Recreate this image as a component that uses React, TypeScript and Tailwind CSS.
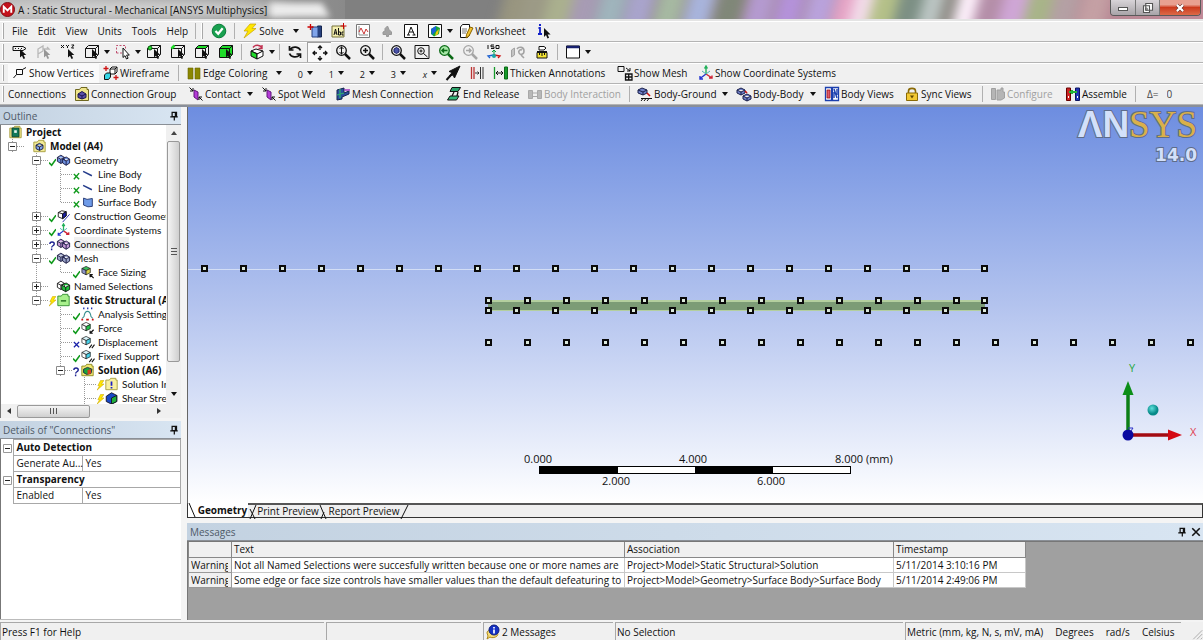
import type { ReactNode } from "react";
import clsx from "clsx";

/* ---------- icons ---------- */

const Svg = ({ children, className = "h-4 w-4" }: { children: ReactNode; className?: string }) => (
  <svg viewBox="0 0 16 16" className={clsx("shrink-0", className)} fill="none" stroke="#111" aria-hidden="true">
    {children}
  </svg>
);

const cursor = <path d="M8 5v8.500l2-1.800 1.500 3.300 1.600-.8-1.500-3.100h2.700z" fill="#111" stroke="none" />;

const cubeLines = <path d="M1.500 4.500l3-3h10v9l-3 3h-10zM1.500 4.500h10v9M11.500 4.500l3-3" />;

const isoCube = (left: string, right: string, top: string) => (
  <g stroke="#1a1a1a" strokeLinejoin="round">
    <path d="M2 5l6-3 6 3-6 3z" fill={top} />
    <path d="M2 5v6l6 3V8z" fill={left} />
    <path d="M14 5v6l-6 3V8z" fill={right} />
  </g>
);

const twoCubes = (fill: string) => (
  <g stroke="#14143c" strokeLinejoin="round" fill={fill}>
    <path d="M1 5l4-2.500L9 5v4.500l-4 2.500-4-2.500zM1 5l4 2 4-2M5 7v5" />
    <path d="M7 7l4-2.500L15 7v4.500L11 14l-4-2.500zM7 7l4 2 4-2M11 9v5" />
  </g>
);

const folder = (fill: string, line: string) => (
  <path d="M1.500 3.500h4l1.500-2h6v2h1.500v11h-13z" fill={fill} stroke={line} />
);

const magnifier = (color: string, mark: ReactNode, lens = "none") => (
  <g stroke={color}>
    <circle cx="6.500" cy="6.500" r="4.800" fill={lens} strokeWidth="1.300" />
    <path d="M10 10l5 5" strokeWidth="2.500" />
    {mark}
  </g>
);

const bolt = <path d="M8 1h6l-4 4.500h4L2 15l4-7H2z" fill="#ffe600" stroke="#c9a400" strokeWidth=".7" />;

const icons: Record<string, ReactNode> = {
  check: (
    <>
      <circle cx="8" cy="8" r="6.800" fill="#18a04f" stroke="#0b7b39" />
      <path d="M4.500 8l2.700 2.800 4.500-5.600" stroke="#fff" strokeWidth="2.200" />
    </>
  ),
  bolt,
  plane: (
    <>
      <path d="M10.500 3h4v11h-4z" fill="#27407e" stroke="#15254f" />
      <path d="M5 4h6v10H5z" fill="#7fa4ea" stroke="#27407e" />
      <path d="M3.500 1v6M.5 4h6" stroke="#c00" strokeWidth="1.300" />
    </>
  ),
  label: (
    <>
      <path d="M1 3h12v11H1z" fill="#f4efb0" stroke="#77723a" />
      <path d="M3 12l1.500-6L6 12M3.500 10H6M7.500 5v7h2V9h-2M12.500 9h-1.500v3h1.500" />
      <path d="M12.500 0v6M9.500 3h6" stroke="#c00" />
    </>
  ),
  chart: (
    <>
      <path d="M1.500 1.500h13v13h-13z" fill="#fff" stroke="#777" />
      <path d="M4 3v9h9" stroke="#888" />
      <path d="M4 9l2-4 3 6 2-5 2 3" stroke="#c33" />
    </>
  ),
  grayCloud: <path d="M4 11.500V9l2-1V5.500L8.500 3l1.500 3.500 2.500 2.500v2.500H9.500v2h-2v-2z" fill="#a3a3a3" stroke="#989898" />,
  annotation: (
    <>
      <path d="M1.500 1.500h13v13h-13z" fill="#fff" />
      <path d="M4 12h3M9.500 12h3M5 12l3-8 3.500 8M6 9h4.500" />
    </>
  ),
  contour: (
    <>
      <path d="M1.500 1.500h13v13h-13z" fill="#fff" />
      <path d="M4 6l5-3 4 2-1 6-5 2.500-3-2.500z" fill="#15a53b" stroke="none" />
      <path d="M4 6l5-3v5l-4 4z" fill="#1b63d8" stroke="none" />
      <path d="M9 9l3-3-1 5-3 2z" fill="#f0c80e" stroke="none" />
    </>
  ),
  worksheet: (
    <>
      <path d="M2.500 4l2-2.500h7v11l-2 2h-7z" fill="#fff" />
      <path d="M4 6h5M4 8h5M4 10h4" stroke="#777" />
      <path d="M12 4l3 1-4 8-3 2 .5-3.500z" fill="#f2c230" stroke="#8a6400" />
    </>
  ),
  info: (
    <>
      <path d="M2.500 5H4v6M2 11h4M3 2h2" stroke="#1322c9" strokeWidth="1.800" />
      <path d="M8 5v9l2-2 1.500 3.500 1.600-.8-1.500-3.200h3z" fill="#111" stroke="none" />
    </>
  ),
  tag: (
    <>
      <path d="M1 2.500h10l3 2-3 2H1zM3 4.500h1M6 4.500h1M9 4.500h1" />
      {cursor}
    </>
  ),
  flag: (
    <g opacity=".4">
      <path d="M2 14V5l5-3v5l-5 3M7 5h6l-2-2" stroke="#666" strokeWidth="1.300" />
      {cursor}
    </g>
  ),
  xyz: (
    <>
      <path d="M1 1l3 3M4 1L1 4M6 1l1.500 1.500L9 1M7.500 2v2M11.500 1H14l-2.500 3H14" />
      {cursor}
    </>
  ),
  selectMode: (
    <>
      {cubeLines}
      {cursor}
    </>
  ),
  boxSelect: (
    <>
      <path d="M1.500 9V1.500h9V5M1.500 9H7" stroke="#c05070" strokeDasharray="2 1.500" />
      <path d="M8 4v9.500l2-1.800 1.500 3.300 1.600-.8-1.500-3.100h2.700z" fill="#fff" />
    </>
  ),
  vertex: (
    <>
      {cubeLines}
      <circle cx="4" cy="4" r="2" fill="#1fdc2a" stroke="#0a5d10" />
      {cursor}
    </>
  ),
  edge: (
    <>
      {cubeLines}
      <path d="M1.500 4.500l3-3" stroke="#1fdc2a" strokeWidth="2.500" />
      {cursor}
    </>
  ),
  face: (
    <>
      <path d="M1.500 4.500l3-3h10l-3 3z" fill="#1fdc2a" stroke="none" />
      {cubeLines}
      {cursor}
    </>
  ),
  body: (
    <>
      <path d="M1.500 4.500l3-3h10v9l-3 3h-10z" fill="#1fdc2a" stroke="none" />
      {cubeLines}
      {cursor}
    </>
  ),
  viewCube: (
    <>
      <path d="M2 7l5-2 7 2-5 3z" fill="#fff" />
      <path d="M2 7v5l6 3v-5z" fill="#1fdc2a" />
      <path d="M14 7v5l-6 3v-5z" fill="#fff" />
      <path d="M4 3.500c2-3 7-3 9 .5M13 1v3.500H9.500" stroke="#c03050" strokeWidth="1.400" />
    </>
  ),
  rotate: (
    <path d="M13.500 6.500C12 2.500 6 2 3.500 5M2.500 2v4h4M2.500 9.500C4 13.500 10 14 12.500 11M13.500 14v-4h-4" strokeWidth="1.700" />
  ),
  pan: (
    <path
      d="M8 1v4M8 11v4M1 8h4M11 8h4M6 3l2-2 2 2M6 13l2 2 2-2M3 6L1 8l2 2M13 6l2 2-2 2"
      strokeWidth="1.300"
    />
  ),
  zoom: magnifier("#111", <path d="M6.500 2.500v8M4.500 5l2-2 2 2M4.500 8l2 2 2-2" />),
  zoomIn: magnifier("#111", <path d="M6.500 4v5M4 6.500h5" strokeWidth="1.500" />),
  fit: magnifier("#111", <path d="M4 5l2.500-1.500L9 5v3L6.500 9.500 4 8z" fill="#4a53a8" stroke="#1d2266" />),
  fitBox: (
    <>
      <path d="M1 1.500h14v13H1z" />
      <circle cx="7" cy="7" r="3.300" />
      <path d="M9.500 9.500l4 3.500M5.500 7h3M7 5.500v3" />
    </>
  ),
  prevView: magnifier("#0b6a16", <path d="M9.500 6.500H4M6 4.500l-2 2 2 2" strokeWidth="1.500" />, "#a8e8a8"),
  nextView: magnifier("#a5a5a5", <path d="M4 6.500h5M7 4.500l2 2-2 2" strokeWidth="1.400" />),
  iso: (
    <>
      <path d="M2 1v4M5 4.500h3v-1.700H5V1h3M10 1.500h3v3h-3z" />
      <path d="M8 6v5M6 8l2-2 2 2" stroke="#0a9a3a" />
      <path d="M8 11l-6 1 2 2" stroke="#1a5fd0" strokeWidth="1.300" />
      <path d="M8 11l6 1-2 2" stroke="#c11" strokeWidth="1.300" />
      <circle cx="8" cy="12" r="2" fill="#1aa7a7" stroke="none" />
    </>
  ),
  look: (
    <g stroke="#a3a3a3">
      <path d="M1.500 6l3-2v7l-3 2z" fill="#c4c4c4" />
      <path d="M7 5c2-3 7-2 7 2s-4 4-5 2 1-4 3-3M11 11l3 3" strokeWidth="1.600" />
    </g>
  ),
  ruler: (
    <>
      <path d="M5 2.500h5l2 1.500-2 2H5z" fill="#fff" />
      <path d="M3 8.500h10v5.500H3z" fill="#f4e434" />
      <path d="M5.500 9v2M8 9v3M10.500 9v2M3 7.500h10" />
    </>
  ),
  viewport: (
    <>
      <path d="M1.500 2h13v12h-13z" fill="#fff" />
      <path d="M1.500 3h13" stroke="#17206e" strokeWidth="2.500" />
    </>
  ),
  vertices: <path d="M4.500 4.500h6v5h-6zM10.500 4.500L14 2.500M1.500 13l3-3.500" />,
  wireframe: (
    <>
      <path d="M7 4l2-2h5v5l-2 2H7zM7 4h5v5M12 4l2-2" fill="#fff" />
      <path d="M1.500 10l2-2h4v4l-2 2.500h-4z" fill="#35d5e5" />
      <path d="M3 1v5M.5 3.500h5M13 10v5M10.500 12.500h5" stroke="#c11" strokeWidth="1.300" />
    </>
  ),
  coloring: <path d="M2 3h5v11H2zM9 3h5v11H9z" fill="#8b8700" stroke="#6a6600" strokeWidth=".6" />,
  arrow: (
    <>
      <path d="M1.500 15l4.500-5" strokeWidth="2" />
      <path d="M15 1L4 6.500l3 1L4.500 11l3.500-1 1.500 3z" fill="#111" strokeLinejoin="round" />
    </>
  ),
  distance: (
    <>
      <path d="M2.500 2v12M5 2v12" stroke="#b33" strokeWidth="1.300" />
      <path d="M11.500 2v12M14 2v12M6 8h4M8.500 6.500L10 8l-1.500 1.500" stroke="#333" />
    </>
  ),
  thicken: (
    <>
      <path d="M1.500 2v12" stroke="#169a2a" strokeWidth="1.300" />
      <path d="M3 8h7M5 6L3 8l2 2M8 6l2 2-2 2" />
      <path d="M11.500 2h3v12h-3z" fill="#169a2a" stroke="#0b6a16" />
    </>
  ),
  mesh: (
    <>
      <path d="M1 1.500h6v5H1zM9 3l4 3M13 3v3h-3" />
      <path d="M8.500 9H15v6H8.500zM11.700 9v6M8.500 12H15" strokeWidth="1.300" />
    </>
  ),
  triad: (
    <g strokeWidth="1.400">
      <path d="M8 1v8M6.500 3.500L8 1l1.500 2.500" stroke="#22b05a" />
      <path d="M8 9l-6 4.500M2 11v3h3" stroke="#2334d0" />
      <path d="M8 9l6 4M14 10.500V13h-3" stroke="#d02334" />
      <path d="M8 9l4-3M8 9L4 6" stroke="#4bb0b0" strokeWidth="1" />
    </g>
  ),
  connGroup: (
    <>
      {folder("#efe58a", "#6f6820")}
      <path d="M4 8l4-2.500L12 8v3.500L8 13l-4-1.500z" fill="#5a4fa8" stroke="#1c1650" />
      <path d="M4 8l4 2 4-2M8 10v3" stroke="#1c1650" />
    </>
  ),
  contact: (
    <>
      <path d="M6 4l4 2v8l-4-3z" fill="#b43bd8" stroke="#5e1578" />
      <path d="M1.500 1.500L5 5M5 2v3H2M14.500 14.500L11 11M11 14v-3h3" />
    </>
  ),
  meshConn: (
    <>
      <path d="M2 4l7-2v5l5-2v3L7 11v2l-5 1z" fill="#2b4f9e" stroke="#13224d" />
      <path d="M2 9l7-2M5 3v9" stroke="#2fae6b" strokeWidth="1.300" />
      <path d="M9 4h6" stroke="#a03ac0" strokeWidth="1.500" />
    </>
  ),
  release: (
    <>
      <path d="M6 1.500h8.500l-2.500 4H4z" fill="#2aa36a" />
      <path d="M8 6l-2 4M12 6l-1 4" strokeWidth="1.300" />
      <path d="M4 10h9l-2.500 4H1.500z" fill="#33b97a" />
    </>
  ),
  interaction: <path d="M1.500 4.500h4v8h-4zM10.500 4.500h4v8h-4zM6 7h4M6 10.500h4" fill="#b8b8b8" stroke="#a8a8a8" />,
  ground: (
    <>
      <path d="M1 4l4-2 5 2v3L6 9 1 7z" fill="#6f80c8" stroke="#191f4a" />
      <path d="M1 4l5 2 4-2M6 6v3" stroke="#191f4a" />
      <path d="M10 7l3 3" stroke="#c11" strokeWidth="1.600" />
      <path d="M4 12.500h11M6 12.500L4 15M9 12.500L7 15M12 12.500L10 15" />
    </>
  ),
  bodyBody: (
    <>
      <path d="M1 4l4-2 4 2v3L5 9 1 7zM1 4l4 2 4-2M5 6v3" fill="#6f80c8" stroke="#191f4a" />
      <path d="M7 10l4-2 4 2v3l-4 2-4-2zM7 10l4 2 4-2M11 12v3" fill="#6f80c8" stroke="#191f4a" />
      <path d="M9 5l2 2" stroke="#c11" strokeWidth="1.600" />
    </>
  ),
  bodyViews: (
    <>
      <path d="M1.500 1.500h6v13h-6zM8.500 1.500h6v13h-6z" fill="#fff" stroke="#1b3fae" strokeWidth="1.300" />
      <path d="M3 4h3v8H3z" fill="#e05a6c" stroke="#911" strokeWidth=".8" />
      <path d="M10 3l3 9M10 6v6M13 3v6" stroke="#1b3fae" strokeWidth="1.400" />
    </>
  ),
  lock: (
    <>
      <path d="M4.500 7V5c0-3.500 7-3.500 7 0v2" stroke="#8a6a06" strokeWidth="1.600" />
      <path d="M2.500 7h11v7.500h-11z" fill="#f2c832" stroke="#8a6a06" />
      <path d="M6 9.500h4L8 12.500z" fill="#5e4700" stroke="none" />
    </>
  ),
  configure: <path d="M1.500 2.500h4v11h-4zM7 4h4V2h2v4h1.500v6L11 14H7V6z" fill="#b5b5b5" stroke="#a0a0a0" />,
  assemble: (
    <>
      <path d="M1.500 2h4v12.500h-4z" fill="#c22" stroke="#600" />
      <path d="M10.500 2h4v12.500h-4z" fill="#2233b5" stroke="#0b1260" />
      <path d="M4 6h8M7 4v4" stroke="#25b53a" strokeWidth="2" />
      <path d="M3 11h1M12 11h1" stroke="#fff" strokeWidth="2" />
    </>
  ),
  project: (
    <>
      {folder("#efe58a", "#a39a3a")}
      <path d="M4 3.500h8v10H4z" fill="#117a5a" stroke="#0a3f2f" />
      <path d="M6.500 6h3v3h-3z" fill="#e8f5ef" stroke="none" />
    </>
  ),
  model: (
    <>
      {folder("#f2ea96", "#a39a3a")}
      <path d="M4 7l4-2 4 2v4l-4 2-4-2zM4 7l4 2 4-2M8 9v4" fill="#7fa4ea" stroke="#14143c" />
    </>
  ),
  geometry: twoCubes("#6f92e0"),
  line: <path d="M3 5l10 5" stroke="#223a8a" strokeWidth="1.600" />,
  surface: <path d="M3.500 3.500l4 1.500 6-1v9l-5 .5-5-2z" fill="#6f9be8" stroke="#1c2f6a" />,
  construction: (
    <>
      <path d="M2 4l4-2 5 1v5l-4 3-5-2zM2 4l5 1.500L11 3M7 5.500V11" fill="#fff" />
      <path d="M7 5.500L11 3v5l-4 3z" fill="#1a1fa8" />
      <path d="M7 15l8-9" stroke="#1a1fa8" />
    </>
  ),
  connections: twoCubes("#c59ad8"),
  meshTree: twoCubes("#9aa3c8"),
  faceSizing: (
    <>
      <g transform="scale(.8)">{isoCube("#8a93c8", "#d8d048", "#3cbf5a")}</g>
      <path d="M15 15l-4-4M11 14v-3h3" strokeWidth="1.400" />
    </>
  ),
  named: (
    <>
      <path d="M1 5l4-2.500L9 5v4.500l-4 2.500-4-2.500zM1 5l4 2 4-2M5 7v5" fill="#fff" />
      <path d="M6 7l5-2.500L15 7v5l-4.500 2.500L6 12zM6 7l4.500 2.500L15 7M10.500 9.500v5" fill="#1fc03a" />
    </>
  ),
  environment: (
    <>
      {folder("#a8f08c", "#2e8a2e")}
      <path d="M5 9h6" stroke="#176317" strokeWidth="1.500" />
    </>
  ),
  analysis: (
    <>
      <path d="M3 1.500h1.500M7.500 1.500H9M12 1.500h1.500" stroke="#1a2fb0" strokeWidth="2" />
      <path d="M2 13l2-2c1-8 7-8 8 0l2 2" stroke="#3a8f8f" strokeWidth="1.200" />
      <path d="M1 14.500h2M6.500 14.500h3M13 14.500h2" stroke="#c11" strokeWidth="2" />
    </>
  ),
  force: (
    <>
      <g transform="scale(.8)">{isoCube("#fff", "#25c04a", "#fff")}</g>
      <path d="M15 10l-4 4M11 11v3h3" strokeWidth="1.400" />
    </>
  ),
  support: (
    <>
      <g transform="scale(.8)">{isoCube("#fff", "#48d0e8", "#d8f4fa")}</g>
      <path d="M10 15l3-4M13 15l3-4" strokeWidth="1.200" />
    </>
  ),
  solution: (
    <>
      {folder("#f2ea70", "#8a8320")}
      <path d="M3.500 7L8 5l5 2-1 5-5 1-3.500-2z" fill="#18a53b" stroke="#124" />
      <path d="M8 8l4-1v5l-4 1z" fill="#d8401e" stroke="none" />
    </>
  ),
  solutionInfo: (
    <>
      {folder("#f8f0a0", "#a39a3a")}
      <path d="M8 5v5M8 11.500v1.500" stroke="#1a1fc8" strokeWidth="2" />
    </>
  ),
  result: (
    <>
      <path d="M2 6l6-4 6 3v7l-6 3-6-3z" fill="#1848c8" stroke="#112" />
      <path d="M8 8l6-3v7l-6 3z" fill="#1fae3a" stroke="#112" />
    </>
  ),
  messages: (
    <>
      <path d="M2 9c0-3 4-4 7-3s5 4 3 6-6 2-7 1l-3 2 1-3z" fill="#f4dc7a" stroke="#b08a1a" />
      <circle cx="9" cy="6" r="5" fill="#1531c4" stroke="#0c1d80" />
      <path d="M9 3v1.500M9 5.500v4" stroke="#fff" strokeWidth="1.700" />
    </>
  ),
};

const Icon = ({ name }: { name: string }) => <Svg>{icons[name]}</Svg>;

const Pin = () => (
  <Svg className="h-2.5 w-2.5">
    <path d="M5 2h7v7H5zM2 9.500h12M8.500 10v5" strokeWidth="2" />
    <path d="M10.500 2v7" strokeWidth="2.500" />
  </Svg>
);

const Caret = () => (
  <svg viewBox="0 0 6 4" className="h-1 w-1.5 shrink-0" aria-hidden="true">
    <path d="M0 0h6L3 4z" fill="#111" />
  </svg>
);

/* ---------- toolbars ---------- */

const Toolbar = ({ children, label }: { children: ReactNode; label: string }) => (
  <div
    role="toolbar"
    aria-label={label}
    className="flex h-[21px] shrink-0 items-center overflow-hidden border-b border-[#b4b4b4] bg-[#f0f0f0] shadow-[inset_0_1px_0_#fff]"
  >
    <Grip />
    {children}
  </div>
);

const Grip = () => <div className="mr-1 ml-0.5 h-4 w-0.5 shrink-0 border-r border-[#a8a8a8] bg-white" />;

const Sep = () => <div className="mx-[3px] h-4 w-px shrink-0 bg-[#b0b0b0]" />;

const Tool = ({ icon, label, menu, active }: { icon: string; label: string; menu?: boolean; active?: boolean }) => (
  <button
    type="button"
    aria-label={label}
    className={clsx(
      "flex h-5 shrink-0 items-center gap-1 px-1",
      menu ? "w-[31px]" : "w-6",
      active && "border-t border-l border-[#a0a0a0] bg-[#f9f9f9]",
    )}
  >
    <Icon name={icon} />
    {menu && <Caret />}
  </button>
);

type TextToolProps = {
  icon?: string;
  text: string;
  width: string;
  menu?: boolean;
  active?: boolean;
  disabled?: boolean;
};

const TextTool = ({ icon, text, width, menu, active, disabled }: TextToolProps) => (
  <button
    type="button"
    disabled={disabled}
    className={clsx(
      "flex h-5 shrink-0 items-center gap-px whitespace-nowrap",
      width,
      icon && "pl-1",
      active && "bg-[#fafafa]",
      disabled && "text-[#a0a0a0]",
    )}
  >
    {icon && <Icon name={icon} />}
    <span>{text}</span>
    {menu && (
      <span className="ml-auto pr-1">
        <Caret />
      </span>
    )}
  </button>
);

const MenuBar = () => (
  <Toolbar label="Main">
    <nav className="flex gap-2.5 pl-1">
      {["File", "Edit", "View", "Units", "Tools", "Help"].map((item) => (
        <button type="button" key={item}>
          {item}
        </button>
      ))}
    </nav>
    <div className="flex items-center pl-1">
      <Sep />
      <Grip />
      <Tool icon="check" label="Status" />
      <Sep />
      <TextTool icon="bolt" text="Solve" width="w-[65px]" menu />
      <Tool icon="plane" label="New section plane" />
      <Tool icon="label" label="New annotation" />
      <Tool icon="chart" label="New chart" />
      <Tool icon="grayCloud" label="New simulation" />
      <Tool icon="annotation" label="New comment" />
      <Tool icon="contour" label="New figure" menu />
      <TextTool icon="worksheet" text="Worksheet" width="w-[78px]" />
      <Tool icon="info" label="Information" />
    </div>
  </Toolbar>
);

const GraphicsBar = () => (
  <Toolbar label="Graphics">
    <Tool icon="tag" label="Label" />
    <Tool icon="flag" label="Direction" />
    <Tool icon="xyz" label="Hit point" />
    <Tool icon="selectMode" label="Select type" menu />
    <Tool icon="boxSelect" label="Select mode" menu />
    <Tool icon="vertex" label="Vertex" />
    <Tool icon="edge" label="Edge" />
    <Tool icon="face" label="Face" />
    <Tool icon="body" label="Body" />
    <Sep />
    <Tool icon="viewCube" label="Extend selection" menu />
    <Sep />
    <Tool icon="rotate" label="Rotate" />
    <Tool icon="pan" label="Pan" active />
    <Tool icon="zoom" label="Zoom" />
    <Tool icon="zoomIn" label="Box zoom" />
    <Sep />
    <Tool icon="fit" label="Zoom to fit" />
    <Tool icon="fitBox" label="Magnifier" />
    <Tool icon="prevView" label="Previous view" />
    <Tool icon="nextView" label="Next view" />
    <Tool icon="iso" label="Isometric view" />
    <Tool icon="look" label="Look at" />
    <Tool icon="ruler" label="Rescale annotations" />
    <Sep />
    <Tool icon="viewport" label="Viewports" menu />
  </Toolbar>
);

const EdgeBar = () => (
  <Toolbar label="Edge graphics options">
    <TextTool icon="vertices" text="Show Vertices" width="w-[91px]" active />
    <TextTool icon="wireframe" text="Wireframe" width="w-[76px]" />
    <Sep />
    <TextTool icon="coloring" text="Edge Coloring" width="w-[104px]" menu />
    {["0", "1", "2", "3", "x"].map((n) => (
      <button type="button" key={n} className="flex h-5 w-[31px] shrink-0 items-center justify-end gap-1 pr-1">
        <span className={clsx("pt-1 text-[9px]", n === "x" && "italic")}>{n}</span>
        <Caret />
      </button>
    ))}
    <Tool icon="arrow" label="Edge direction" />
    <Tool icon="distance" label="Explode" />
    <TextTool icon="thicken" text="Thicken Annotations" width="w-[124px]" />
    <TextTool icon="mesh" text="Show Mesh" width="w-[81px]" />
    <TextTool icon="triad" text="Show Coordinate Systems" width="w-[146px]" />
  </Toolbar>
);

const ConnectionsBar = () => (
  <Toolbar label="Connections">
    <TextTool text="Connections" width="w-[62px]" />
    <TextTool icon="connGroup" text="Connection Group" width="w-[114px]" />
    <TextTool icon="contact" text="Contact" width="w-[73px]" menu />
    <TextTool icon="contact" text="Spot Weld" width="w-[74px]" />
    <TextTool icon="meshConn" text="Mesh Connection" width="w-[111px]" />
    <TextTool icon="release" text="End Release" width="w-[81px]" />
    <TextTool icon="interaction" text="Body Interaction" width="w-[103px]" disabled />
    <Sep />
    <TextTool icon="ground" text="Body-Ground" width="w-[99px]" menu />
    <TextTool icon="bodyBody" text="Body-Body" width="w-[88px]" menu />
    <TextTool icon="bodyViews" text="Body Views" width="w-[80px]" />
    <TextTool icon="lock" text="Sync Views" width="w-[79px]" />
    <Sep />
    <TextTool icon="configure" text="Configure" width="w-[75px]" disabled />
    <TextTool icon="assemble" text="Assemble" width="w-[71px]" />
    <Sep />
    <label className="flex items-center gap-2 pl-2 text-[#444]">
      Δ=
      <input className="w-6 bg-transparent" defaultValue="0" />
    </label>
  </Toolbar>
);

/* ---------- title bar ---------- */

const glass = [
  { x: 515, c: "#98957f" },
  { x: 535, c: "#9c9a86" },
  { x: 560, c: "#aab08e" },
  { x: 585, c: "#a79bb4" },
  { x: 612, c: "#9fb4bc" },
  { x: 640, c: "#a9a4cc" },
  { x: 670, c: "#a6b9a2" },
  { x: 700, c: "#a8b4dc" },
  { x: 730, c: "#7f8778" },
  { x: 760, c: "#b49ad0" },
  { x: 790, c: "#b492da" },
  { x: 820, c: "#b9a2dc" },
  { x: 848, c: "#e6a4c6" },
  { x: 866, c: "#f2dcea" },
  { x: 885, c: "#b4c088" },
  { x: 910, c: "#7c8f84" },
  { x: 935, c: "#bcc6c4" },
  { x: 955, c: "#8d8a84" },
  { x: 970, c: "#fdf0fb" },
  { x: 990, c: "#b48ea8" },
  { x: 1015, c: "#cfa6d6" },
  { x: 1040, c: "#a8b488" },
  { x: 1065, c: "#b4a0a4" },
  { x: 1095, c: "#c4a0a4" },
];

const TitleBar = () => (
  <header className="relative flex h-[21px] shrink-0 justify-between overflow-hidden border-b-2 border-[#e4e4e4] bg-linear-to-r from-[#b8b8b8] via-[#808080] via-35% to-[#c08a98]">
    <svg className="absolute top-0 left-0 h-5 w-full" aria-hidden="true">
      <ellipse cx="140" cy="9" rx="150" ry="8" fill="#d4d4d4" className="blur-[6px]" />
      <path d="M345 0h170v20H345z" fill="#808080" />
      <g className="blur-[6px]">
        {glass.map((g) => (
          <path key={g.x} d={`M${g.x - 8} -12h26l-12 44h-26z`} fill={g.c} />
        ))}
      </g>
      <path d="M270 3h52l8 14h-60z" fill="#ececec" className="blur-[3px]" />
    </svg>
    <div className="relative flex items-center gap-[3px]">
      <svg viewBox="0 0 16 16" className="h-[15px] w-[15px]" aria-hidden="true">
        <circle cx="8" cy="8" r="7.500" fill="#c4121c" stroke="#7d0a10" />
        <path d="M4 11.500V5l4 4 4-4v6.500" fill="none" stroke="#fff" strokeWidth="2" />
      </svg>
      <h1>A : Static Structural - Mechanical [ANSYS Multiphysics]</h1>
    </div>
    <div className="relative mr-0.5 flex h-4 overflow-hidden rounded-b border border-t-0 border-[#5a5a5a]">
      <button type="button" aria-label="Minimize" className="flex w-[25px] items-end justify-center border-r border-[#777] bg-linear-to-b from-[#d8d4d8] to-[#a8a4a8] pb-1">
        <span className="h-1 w-2.5 border border-[#555] bg-white" />
      </button>
      <button type="button" aria-label="Restore" className="flex w-6 items-center justify-center border-r border-[#777] bg-linear-to-b from-[#d8d4d8] to-[#a8a4a8]">
        <Svg className="h-3 w-3">
          <path d="M5 2h9v9H5zM2 5h8v9H2z" fill="#fff" stroke="#555" strokeWidth="1.500" />
          <path d="M5 8h2v3H5z" stroke="#555" />
        </Svg>
      </button>
      <button type="button" aria-label="Close" className="flex w-10 items-center justify-center bg-linear-to-b from-[#e8a090] from-30% via-[#cc3a1c] via-50% to-[#dc6a48]">
        <Svg className="h-2.5 w-2.5">
          <path d="M3 3l10 10M13 3L3 13" stroke="#5a2018" strokeWidth="5.500" />
          <path d="M3 3l10 10M13 3L3 13" stroke="#fff" strokeWidth="3.500" />
        </Svg>
      </button>
    </div>
  </header>
);

/* ---------- outline tree ---------- */

type TreeNode = {
  text: string;
  icon: string;
  // one guide cell per level: v = line, t = tee, c = corner, +/- = expander, empty = nothing
  guides: string[];
  status?: "ok" | "okx" | "ask" | "x" | "bolt";
  bold?: boolean;
  selected?: boolean;
};

const nodes: TreeNode[] = [
  { text: "Project", icon: "project", guides: [], bold: true },
  { text: "Model (A4)", icon: "model", guides: ["-"], bold: true },
  { text: "Geometry", icon: "geometry", guides: ["", "-"], status: "ok" },
  { text: "Line Body", icon: "line", guides: ["", "v", "t"], status: "okx" },
  { text: "Line Body", icon: "line", guides: ["", "v", "t"], status: "okx" },
  { text: "Surface Body", icon: "surface", guides: ["", "v", "c"], status: "okx" },
  { text: "Construction Geometry", icon: "construction", guides: ["", "+"], status: "ok" },
  { text: "Coordinate Systems", icon: "triad", guides: ["", "+"], status: "ok" },
  { text: "Connections", icon: "connections", guides: ["", "+"], status: "ask", selected: true },
  { text: "Mesh", icon: "meshTree", guides: ["", "-"], status: "ok" },
  { text: "Face Sizing", icon: "faceSizing", guides: ["", "v", "c"], status: "ok" },
  { text: "Named Selections", icon: "named", guides: ["", "+"] },
  { text: "Static Structural (A5)", icon: "environment", guides: ["", "-"], status: "bolt", bold: true },
  { text: "Analysis Settings", icon: "analysis", guides: ["", "", "t"], status: "ok" },
  { text: "Force", icon: "force", guides: ["", "", "t"], status: "ok" },
  { text: "Displacement", icon: "support", guides: ["", "", "t"], status: "x" },
  { text: "Fixed Support", icon: "support", guides: ["", "", "t"], status: "ok" },
  { text: "Solution (A6)", icon: "solution", guides: ["", "", "-"], status: "ask", bold: true },
  { text: "Solution Information", icon: "solutionInfo", guides: ["", "", "", "t"], status: "bolt" },
  { text: "Shear Stress", icon: "result", guides: ["", "", "", "t"], status: "bolt" },
];

const Guide = ({ kind }: { kind: string }) => {
  const box = kind === "+" || kind === "-";
  return (
    <svg viewBox="0 0 24 14" className="h-3.5 w-6 shrink-0" fill="none" stroke="#999" aria-hidden="true">
      <g strokeDasharray="1 1">
        {(kind === "v" || kind === "t") && <path d="M11.500 0v14" />}
        {kind === "c" && <path d="M11.500 0v7" />}
        {(kind === "t" || kind === "c") && <path d="M12 7.500h12" />}
        {box && <path d="M11.500 0v14M16 7.500h8" />}
      </g>
      {box && <path d="M7.500 3.500h8v8h-8z" fill="#fff" stroke="#8a8a8a" />}
      {box && <path d="M9 7.500h5" stroke="#222" />}
      {kind === "+" && <path d="M11.500 5v5" stroke="#222" />}
    </svg>
  );
};

const statusMarks: Record<string, ReactNode> = {
  ok: <path d="M0 10l3 3 5-7" stroke="#109a1c" strokeWidth="1.800" />,
  okx: <path d="M1 7l6 6M7 6l-6 7" stroke="#109a1c" strokeWidth="1.600" />,
  x: <path d="M1 7l6 6M7 7l-6 6" stroke="#1a22a8" strokeWidth="1.400" />,
  ask: <path d="M1 7c0-3 5-3 5 0 0 2-3 2-3 4M3 12v2" stroke="#1a1f90" strokeWidth="1.600" />,
  bolt: <path d="M4 3h4L5 7h3l-8 7 3-5H1z" fill="#ffe600" stroke="#c9a400" strokeWidth=".6" />,
};

const Outline = () => (
  <section className="flex h-[311px] shrink-0 flex-col">
    <PanelHeader title="Outline" />
    <div className="flex min-h-0 flex-1 border-l border-[#777] bg-white">
      <ul className="min-w-0 flex-1 overflow-hidden">
        {nodes.map((n, i) => (
          <li key={i} className="flex h-3.5 items-center leading-[14px] whitespace-nowrap">
            {n.guides.map((g, k) => (
              <Guide key={k} kind={g} />
            ))}
            <svg viewBox="0 0 8 14" className="h-3.5 w-[7px] shrink-0" fill="none" aria-hidden="true">
              {n.status && statusMarks[n.status]}
            </svg>
            <Svg className="mr-[3px] h-3.5 w-[15px]">{icons[n.icon]}</Svg>
            <span className={clsx(n.bold ? "font-bold" : "font-['Lato',sans-serif]", n.selected && "bg-[#f0f0f0]")}>
              {n.text}
            </span>
          </li>
        ))}
      </ul>
      <div className="flex w-[15px] shrink-0 flex-col items-center bg-[#f0f0f0]">
        <span className="flex h-4 items-center">
          <svg viewBox="0 0 6 4" className="h-1 w-1.5">
            <path d="M0 4h6L3 0z" fill="#444" />
          </svg>
        </span>
        <div className="flex h-[221px] w-[13px] flex-col items-center justify-center gap-0.5 rounded-xs border border-[#999] bg-linear-to-r from-[#f4f4f4] to-[#cfcfcf]">
          <span className="h-px w-1.5 bg-[#555]" />
          <span className="h-px w-1.5 bg-[#555]" />
          <span className="h-px w-1.5 bg-[#555]" />
        </div>
        <span className="flex flex-1 items-end pb-2">
          <Caret />
        </span>
      </div>
    </div>
    <div className="flex h-3.5 shrink-0 items-center border-l border-[#777] bg-[#f0f0f0]">
      <svg viewBox="0 0 4 6" className="mx-1.5 h-1.5 w-1">
        <path d="M4 0v6L0 3z" fill="#333" />
      </svg>
      <div className="flex h-[13px] w-[73px] items-center justify-center gap-0.5 rounded-xs border border-[#999] bg-linear-to-b from-[#f4f4f4] to-[#cfcfcf]">
        <span className="h-1.5 w-px bg-[#555]" />
        <span className="h-1.5 w-px bg-[#555]" />
        <span className="h-1.5 w-px bg-[#555]" />
      </div>
      <svg viewBox="0 0 4 6" className="mr-5 ml-auto h-1.5 w-1">
        <path d="M0 0v6l4-3z" fill="#333" />
      </svg>
    </div>
  </section>
);

const PanelHeader = ({ title, closable }: { title: string; closable?: boolean }) => (
  <div className="flex h-[18px] shrink-0 items-center gap-1 border-b border-[#8a8f96] bg-linear-to-r from-[#c3d2e1] to-[#d8e5f2] pr-0.5 pl-[3px] text-[#4f5a68]">
    <h2 className="flex-1">{title}</h2>
    <button type="button" aria-label={`Pin ${title}`}>
      <Pin />
    </button>
    {closable && (
      <button type="button" aria-label={`Close ${title}`}>
        <Svg className="h-2.5 w-2.5">
          <path d="M2 2l12 12M14 2L2 14" strokeWidth="2.500" />
        </Svg>
      </button>
    )}
  </div>
);

/* ---------- details ---------- */

const details = [
  { group: "Auto Detection", name: "Generate Au...", value: "Yes" },
  { group: "Transparency", name: "Enabled", value: "Yes" },
];

const Details = () => (
  <section className="flex flex-1 flex-col border-b border-[#bbb]">
    <PanelHeader title={'Details of "Connections"'} />
    <div className="flex-1 border-l border-[#777] bg-white">
      <table className="w-full table-fixed border-collapse leading-[15px]">
        <colgroup>
          <col className="w-3" />
          <col className="w-[69px]" />
          <col />
        </colgroup>
        {details.map((d) => (
          <tbody key={d.group}>
            <tr className="h-4">
              <td rowSpan={2} className="p-0 pt-1 align-top">
                <svg viewBox="0 0 9 9" className="ml-0.5 h-[9px] w-[9px]" fill="#fff" stroke="#999">
                  <path d="M.5.5h8v8h-8z" />
                  <path d="M2 4.500h5" stroke="#222" />
                </svg>
              </td>
              <th colSpan={2} className="border border-[#a8a8a8] p-0 pl-[3px] text-left font-bold">
                {d.group}
              </th>
            </tr>
            <tr className="h-4">
              <td className="border border-[#a8a8a8] p-0 pl-[3px] whitespace-nowrap">{d.name}</td>
              <td className="border border-[#a8a8a8] p-0 pl-[3px]">{d.value}</td>
            </tr>
          </tbody>
        ))}
      </table>
    </div>
  </section>
);

/* ---------- graphics window ---------- */

const STEP = 39;
const row = (from: number, count: number, y: number) =>
  Array.from({ length: count }, (_, i) => ({ x: from + i * STEP, y }));

const markers = [
  ...row(16, 21, 162),
  ...row(300, 13, 194),
  { x: 796, y: 194 },
  { x: 300, y: 204 },
  ...row(328, 13, 204),
  ...row(300, 19, 236),
];

const Model = () => (
  <svg className="absolute inset-0 h-full w-full" aria-label="Model geometry">
    <path d="M0 162.500h796" stroke="#d3def5" />
    <rect x="300" y="193" width="497" height="11" fill="#b4cf9f" />
    <rect x="300" y="195" width="497" height="8" fill="#7c9c76" />
    {markers.map((m, i) => (
      <rect key={i} x={m.x - 2} y={m.y - 3} width="5" height="5" fill="#dce9dc" stroke="#0a0a0a" strokeWidth="2" />
    ))}
  </svg>
);

const ScaleBar = () => (
  <div className="absolute bottom-4 left-[336px] w-[370px] text-[11px] leading-3 text-[#111]">
    <div className="flex">
      <span className="w-[155px]">0.000</span>
      <span className="w-[156px]">4.000</span>
      <span className="whitespace-nowrap">8.000 (mm)</span>
    </div>
    <div className="my-px ml-[15px] flex h-2 w-[312px] border border-black bg-white">
      <span className="w-1/4 bg-black" />
      <span className="w-1/4" />
      <span className="w-1/4 bg-black" />
    </div>
    <div className="flex pl-[78px]">
      <span className="w-[155px]">2.000</span>
      <span>6.000</span>
    </div>
  </div>
);

const Triad = () => (
  <svg viewBox="0 0 90 90" className="absolute right-0 bottom-[54px] h-[90px] w-[90px]" aria-label="Axis triad">
    <defs>
      <radialGradient id="cyanBall" cx=".4" cy=".35">
        <stop offset="0" stopColor="#5fe0dc" />
        <stop offset="1" stopColor="#068a88" />
      </radialGradient>
    </defs>
    <path d="M15 75V35" stroke="#0c7f16" strokeWidth="3.500" />
    <path d="M9.500 36L15 22l5.500 14z" fill="#0c8f18" />
    <path d="M15 76h42" stroke="#a30b12" strokeWidth="3.500" />
    <path d="M55 70.500L69 76l-14 5.500z" fill="#d40a14" />
    <circle cx="40" cy="51" r="5.500" fill="url(#cyanBall)" />
    <path d="M15 69h5l-4 6" stroke="#2a30c8" fill="none" />
    <circle cx="15" cy="76" r="5.500" fill="#0a0aa0" />
    <text x="16" y="13" fontSize="11" fill="#26a83c">
      Y
    </text>
    <text x="77" y="77" fontSize="11" fill="#e04050">
      X
    </text>
  </svg>
);

const Viewport = () => (
  <div className="relative min-h-0 flex-1 overflow-hidden border-l border-[#666] bg-linear-to-b from-[#6d8de0] via-[#b3c3ee] via-50% to-white">
    <Model />
    <ScaleBar />
    <Triad />
    <div className="absolute top-0 right-1.5 flex flex-col items-end text-[#d3e0fa]">
      <div className="flex h-9 items-center text-[37px] font-bold [paint-order:stroke] [-webkit-text-stroke:2px_#5e6c8a]">
        <span className="font-['Liberation_Sans',sans-serif]">ΛN</span>
        <span className="font-['Liberation_Serif',serif] font-normal text-[#d9b04a]">SYS</span>
      </div>
      <span className="font-['DejaVu_Sans',sans-serif] text-[17px] leading-6 font-bold [paint-order:stroke] [-webkit-text-stroke:2px_#5e6c8a]">
        14.0
      </span>
    </div>
  </div>
);

const TabEdge = ({ d }: { d: string }) => (
  <svg viewBox="0 0 9 14" className="h-3.5 w-[9px] shrink-0" fill="none" stroke="#111" aria-hidden="true">
    <path d={d} />
  </svg>
);

const ViewTabs = () => (
  <div role="tablist" className="flex h-[15px] shrink-0 border border-t-2 border-[#333] border-t-[#555] bg-[#efefef] leading-3">
    <div className="-mt-0.5 flex bg-white">
      <TabEdge d="M1 0l6 14" />
      <button type="button" role="tab" aria-selected="true" className="w-[51px] font-bold">
        Geometry
      </button>
    </div>
    <TabEdge d="M2 14L8 0M2 4l5 10" />
    <button type="button" role="tab" aria-selected="false" className="w-[62px] whitespace-nowrap">
      Print Preview
    </button>
    <TabEdge d="M1 0l6 14M2 14l3-7" />
    <button type="button" role="tab" aria-selected="false" className="w-[72px] whitespace-nowrap">
      Report Preview
    </button>
    <TabEdge d="M1 14L8 0" />
  </div>
);

/* ---------- messages ---------- */

const messages = [
  {
    text: "Not all Named Selections were succesfully written because one or more names are not valid",
    association: "Project>Model>Static Structural>Solution",
    time: "5/11/2014 3:10:16 PM",
  },
  {
    text: "Some edge or face size controls have smaller values than the default defeaturing tolerance",
    association: "Project>Model>Geometry>Surface Body>Surface Body",
    time: "5/11/2014 2:49:06 PM",
  },
];

const Messages = () => (
  <section className="flex h-[97px] shrink-0 flex-col">
    <PanelHeader title="Messages" closable />
    <div className="flex-1 overflow-hidden border-t border-l border-[#777] bg-[#a0a0a0]">
      <table className="w-[837px] table-fixed border-collapse bg-white leading-[14px]">
        <colgroup>
          <col className="w-[43px]" />
          <col className="w-[393px]" />
          <col className="w-[269px]" />
          <col className="w-[132px]" />
        </colgroup>
        <thead>
          <tr className="h-[15px] bg-[#f0f0f0] text-left">
            {["", "Text", "Association", "Timestamp"].map((h) => (
              <th key={h} className="border border-t-0 border-[#888] p-0 pl-0.5 font-normal">
                {h}
              </th>
            ))}
          </tr>
        </thead>
        <tbody>
          {messages.map((m) => (
            <tr key={m.time} className="h-[15px] whitespace-nowrap">
              <td className="overflow-hidden border border-[#999] bg-[#f0f0f0] p-0 pl-0.5">
                <div className="w-[37px] overflow-hidden">Warning</div>
              </td>
              <td className="overflow-hidden border border-[#c8c8c8] p-0 pl-0.5">
                <div className="w-[387px] overflow-hidden">{m.text}</div>
              </td>
              <td className="overflow-hidden border border-[#c8c8c8] p-0 pl-0.5">{m.association}</td>
              <td className="border border-[#c8c8c8] p-0 pl-0.5">{m.time}</td>
            </tr>
          ))}
        </tbody>
      </table>
    </div>
  </section>
);

/* ---------- status bar ---------- */

const StatusCell = ({ children, className }: { children?: ReactNode; className: string }) => (
  <div className={clsx("flex items-center border-t border-l border-[#a8a8a8] pl-px whitespace-nowrap", className)}>
    {children}
  </div>
);

const StatusBar = () => (
  <footer className="flex h-[18px] shrink-0 gap-0.5 overflow-hidden bg-[#f0f0f0]">
    <StatusCell className="w-[324px]">Press F1 for Help</StatusCell>
    <StatusCell className="w-[155px]" />
    <StatusCell className="w-[130px] gap-px">
      <Icon name="messages" />
      2 Messages
    </StatusCell>
    <StatusCell className="flex-1">No Selection</StatusCell>
    <StatusCell className="w-[276px] gap-3">
      <span>Metric (mm, kg, N, s, mV, mA)</span>
      <span>Degrees</span>
      <span>rad/s</span>
      <span>Celsius</span>
    </StatusCell>
    <div className="flex w-5 items-end justify-end">
      <Svg className="h-3 w-3">
        <path d="M15 3L3 15M15 8l-7 7M15 13l-2 2" stroke="#999" />
      </Svg>
    </div>
  </footer>
);

export default function App() {
  return (
    <div className="flex h-screen flex-col overflow-hidden bg-[#f4f4f4] font-['Open_Sans',sans-serif] text-[10px] leading-[14px] text-[#111]">
      <TitleBar />
      <MenuBar />
      <GraphicsBar />
      <EdgeBar />
      <ConnectionsBar />
      <main className="flex min-h-0 flex-1 gap-1.5 border-t-2 border-[#8a8f99] pb-0.5">
        <aside className="flex w-[181px] shrink-0 flex-col gap-[3px]">
          <Outline />
          <Details />
        </aside>
        <div className="flex min-w-0 flex-1 flex-col">
          <Viewport />
          <ViewTabs />
          <div className="h-[5px] shrink-0" />
          <Messages />
        </div>
      </main>
      <StatusBar />
    </div>
  );
}
